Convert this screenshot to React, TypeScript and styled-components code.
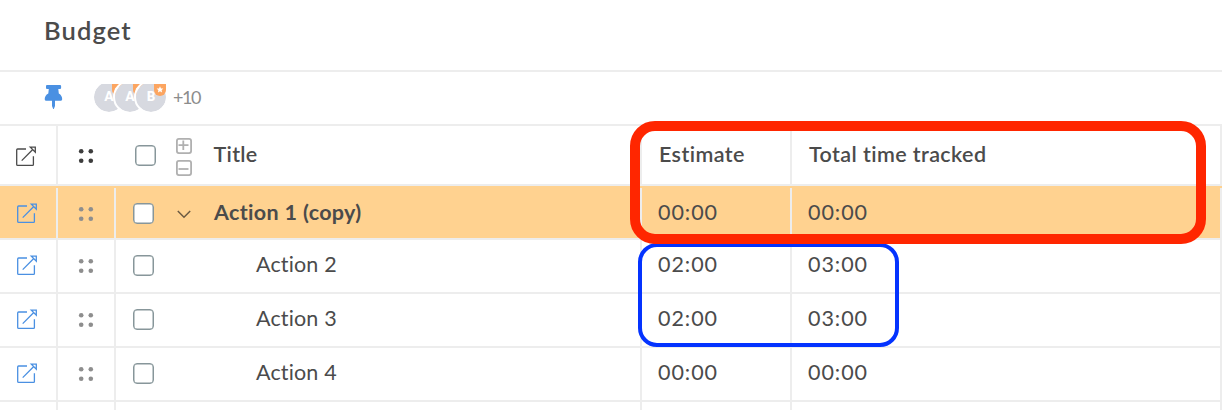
import React from "react";
import styled, { createGlobalStyle } from "styled-components";

const LINE = "#ededed";
const INK = "#4b4b4b";

const Global = createGlobalStyle`
  *, *::before, *::after { box-sizing: border-box; }
  body { margin: 0; background: #fff; overflow: hidden; }
`;

const Page = styled.main`
  position: relative;
  display: flex;
  flex-direction: column;
  width: 1222px;
  height: 410px;
  overflow: hidden;
  font-family: Lato, "Liberation Sans", sans-serif;
  font-variant-ligatures: none;
  color: ${INK};
  svg { display: block; flex: none; }
`;

const Header = styled.header`
  height: 72px;
  flex: none;
  padding: 15px 0 0 44px;
  border-bottom: 2px solid ${LINE};
`;

const Heading = styled.h1`
  margin: 0;
  font-size: 25.5px;
  line-height: 30px;
  font-weight: 600;
  letter-spacing: 1.1px;
`;

const Toolbar = styled.div`
  display: flex;
  align-items: flex-start;
  height: 54px;
  flex: none;
  padding: 12px 0 0 44px;
  border-bottom: 2px solid ${LINE};
`;

const Avatars = styled.div`
  display: flex;
  height: 30px;
  margin-left: 29px;
  overflow: hidden;
`;

const Avatar = styled.div`
  position: relative;
  display: flex;
  justify-content: center;
  width: 34px;
  height: 34px;
  margin: -4px -13px 0 0;
  padding-top: 7px;
  border: 2px solid #fff;
  border-radius: 17px;
  background: #d7d9e0;
  background-clip: padding-box;
  color: #fff;
  font-size: 12.5px;
  line-height: 15px;
  font-weight: 800;
  &:last-child { margin-right: 0; }
`;

const Badge = styled.span`
  position: absolute;
  top: 2px;
  right: 0;
  width: 12px;
  height: 12px;
  border-radius: 0 0 6px 6px;
  background: #fca560;
`;

const More = styled.span`
  margin: 2px 0 0 5px;
  font-size: 18px;
  line-height: 22px;
  letter-spacing: -1.4px;
  color: #8c8c8c;
`;

const Row = styled.div<{ $head?: boolean; $active?: boolean }>`
  display: grid;
  grid-template-columns: ${(p) => (p.$head ? "58px 584px 150px 430px" : "58px 58px 526px 150px 430px")};
  flex: none;
  height: ${(p) => (p.$head ? 60 : 54)}px;
  border-bottom: 2px solid ${LINE};
  background: ${(p) => (p.$active ? "#ffd290" : "#fff")};
  font-weight: ${(p) => (p.$head ? 600 : 400)};
`;

const Cell = styled.div<{ $gap?: boolean; $pad: number }>`
  display: flex;
  align-items: flex-start;
  margin-top: ${(p) => (p.$gap ? 2 : 0)}px;
  padding-left: ${(p) => p.$pad}px;
  border-right: 2px solid ${LINE};
  overflow: hidden;
`;

const IconSlot = styled.span<{ $top: number; $left?: number }>`
  flex: none;
  margin: ${(p) => p.$top}px 0 0 ${(p) => p.$left ?? 0}px;
`;

const Checkbox = styled.span<{ $top: number; $left?: number }>`
  flex: none;
  width: 21px;
  height: 21px;
  margin: ${(p) => p.$top}px 0 0 ${(p) => p.$left ?? 0}px;
  border: 1.5px solid #87969a;
  box-shadow: inset 0 0 0 0.5px #87969a;
  border-radius: 4px;
  background: #fff;
`;

const Expanders = styled.span`
  display: flex;
  flex-direction: column;
  gap: 6px;
  margin: 12px 0 0 20px;
`;

const Text = styled.span<{ $top: number; $left?: number; $track?: number; $bold?: boolean }>`
  margin: ${(p) => p.$top}px 0 0 ${(p) => p.$left ?? 0}px;
  font-size: 21.5px;
  line-height: 26px;
  letter-spacing: ${(p) => p.$track ?? 0}px;
  white-space: nowrap;
  ${(p) => p.$bold && "font-weight: 700;"}
`;

const Highlight = styled.div<{ $x: number; $y: number; $w: number; $h: number; $stroke: number; $radius: number; $color: string }>`
  position: absolute;
  left: ${(p) => p.$x}px;
  top: ${(p) => p.$y}px;
  width: ${(p) => p.$w}px;
  height: ${(p) => p.$h}px;
  border: ${(p) => p.$stroke}px solid ${(p) => p.$color};
  border-radius: ${(p) => p.$radius}px;
`;

const OpenIcon = ({ color }: { color: string }) => (
  <svg width="21" height="21" viewBox="0 0 21 21" fill="none" stroke={color} strokeWidth="1.3">
    <path d="M10 3H1.6Q.7 3 .7 4V18.4Q.7 19.4 1.7 19.4H16.5Q17.4 19.4 17.4 18.4V10.2" />
    <path d="M5.7 14.6 16.5 3.8M14.3 1.1H19.3V6.1Z" />
  </svg>
);

const Dots = ({ color }: { color: string }) => (
  <svg width="16" height="16" viewBox="0 0 16 16" fill={color}>
    <circle cx="3.2" cy="3.2" r="2.3" />
    <circle cx="12.8" cy="3.2" r="2.3" />
    <circle cx="3.2" cy="12.8" r="2.3" />
    <circle cx="12.8" cy="12.8" r="2.3" />
  </svg>
);

const BoxIcon = ({ plus }: { plus?: boolean }) => (
  <svg width="16" height="16" viewBox="0 0 16 16" fill="none" stroke="#b0b0b0" strokeWidth="1.8">
    <rect x=".9" y=".9" width="14.2" height="14.2" rx="2" />
    <path d={plus ? "M2.5 7.2H12.5M7.3 2.5V12" : "M2.5 9H12.5"} />
  </svg>
);

const Chevron = () => (
  <svg width="14" height="9" viewBox="0 0 14 9" fill="none" stroke="#6b5a42" strokeWidth="1.5">
    <path d="M.8 1 7 7.2 13.2 1" />
  </svg>
);

const Pin = () => (
  <svg width="19" height="26" viewBox="0 0 19 26" fill="#4a90e2">
    <path d="M3 1H16Q17.1 1 17.1 2V4Q17.1 5 16 5H14.3L14.8 9.4Q18.2 11.4 18.2 15.3Q18.2 16.7 17 16.7H11V22L9.8 25H9.2L8 22V16.7H1.9Q.7 16.7.7 15.3Q.7 11.4 4.3 9.4L4.8 5H3Q2 5 2 4V2Q2 1 3 1Z" />
  </svg>
);

const Star = () => (
  <svg width="12" height="12" viewBox="0 0 12 12" fill="#fff">
    <path d="M6 2.2 7 4.4 9.3 4.6 7.6 6.2 8.1 8.5 6 7.3 3.9 8.5 4.4 6.2 2.7 4.6 5 4.4Z" />
  </svg>
);

const rows = [
  { title: "Action 1 (copy)", estimate: "00:00", tracked: "00:00", parent: true },
  { title: "Action 2", estimate: "02:00", tracked: "03:00" },
  { title: "Action 3", estimate: "02:00", tracked: "03:00" },
  { title: "Action 4", estimate: "00:00", tracked: "00:00" },
  { title: "", estimate: "", tracked: "" },
];

export default function App() {
  return (
    <Page>
      <Global />
      <Header>
        <Heading>Budget</Heading>
      </Header>
      <Toolbar>
        <Pin />
        <Avatars>
          {["A", "A", "B"].map((letter, i) => (
            <Avatar key={i}>
              {letter}
              <Badge><Star /></Badge>
            </Avatar>
          ))}
        </Avatars>
        <More>+10</More>
      </Toolbar>
      <Row $head>
        <Cell $pad={16}><IconSlot $top={20}><OpenIcon color="#4b4b4b" /></IconSlot></Cell>
        <Cell $pad={20}>
          <IconSlot $top={22}><Dots color="#3d3d3d" /></IconSlot>
          <Checkbox $top={19} $left={40.5} />
          <Expanders><BoxIcon plus /><BoxIcon /></Expanders>
          <Text $top={15} $left={22} $track={0.3}>Title</Text>
        </Cell>
        <Cell $pad={17}><Text $top={15} $track={0.4}>Estimate</Text></Cell>
        <Cell $pad={17}><Text $top={15} $track={0.4}>Total time tracked</Text></Cell>
      </Row>
      {rows.map((row, i) => (
        <Row key={i} $active={row.parent}>
          <Cell $pad={17} $gap={row.parent}>
            <IconSlot $top={15}><OpenIcon color="#4a90e2" /></IconSlot>
          </Cell>
          <Cell $pad={20} $gap={row.parent}>
            <IconSlot $top={18}><Dots color="#8e8e8e" /></IconSlot>
          </Cell>
          <Cell $pad={17} $gap={row.parent}>
            <Checkbox $top={15} />
            {row.parent && <IconSlot $top={22} $left={23}><Chevron /></IconSlot>}
            <Text $top={11} $left={row.parent ? 23 : 102} $track={row.parent ? 0.35 : 0.15} $bold={row.parent}>
              {row.title}
            </Text>
          </Cell>
          <Cell $pad={16} $gap={row.parent}><Text $top={11} $track={0.95}>{row.estimate}</Text></Cell>
          <Cell $pad={16} $gap={row.parent}><Text $top={11} $track={0.95}>{row.tracked}</Text></Cell>
        </Row>
      ))}
      <Highlight $x={638} $y={243} $w={261} $h={104} $stroke={4} $radius={19} $color="#0433ff" />
      <Highlight $x={630} $y={121} $w={576} $h={123} $stroke={10} $radius={25} $color="#ff2600" />
    </Page>
  );
}
